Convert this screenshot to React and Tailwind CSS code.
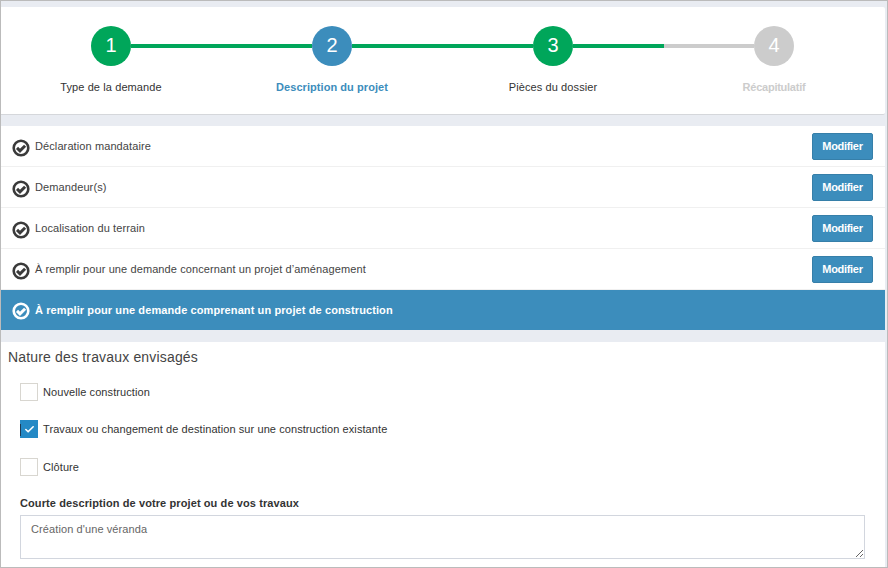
import { Check } from 'lucide-react';

const steps = [
  { n: 1, label: 'Type de la demande', circle: 'bg-[#00a65a]', text: 'text-[#333] font-normal tracking-[0.1px]', left: 'bg-transparent', right: 'bg-[#00a65a]' },
  { n: 2, label: 'Description du projet', circle: 'bg-[#3c8dbc]', text: 'text-[#3c8dbc] font-bold tracking-[0.06px]', left: 'bg-[#00a65a]', right: 'bg-[#00a65a]' },
  { n: 3, label: 'Pièces du dossier', circle: 'bg-[#00a65a]', text: 'text-[#333] font-normal tracking-[0.1px]', left: 'bg-[#00a65a]', right: 'bg-[#00a65a]' },
  { n: 4, label: 'Récapitulatif', circle: 'bg-[#cccccc]', text: 'text-[#cccccc] font-bold tracking-[-0.25px]', left: 'bg-[#cccccc]', right: 'bg-transparent' },
];

const rows = [
  'Déclaration mandataire',
  'Demandeur(s)',
  'Localisation du terrain',
  'À remplir pour une demande concernant un projet d’aménagement',
];

function CircleCheck({ color }) {
  return (
    <svg width="18" height="18" viewBox="0 0 18 18" className="shrink-0">
      <circle cx="9" cy="9" r="7.3" fill="none" stroke={color} strokeWidth="2.6" />
      <path d="M5 8.9 L8 11.9 L13.1 6.8" fill="none" stroke={color} strokeWidth="3" />
    </svg>
  );
}

function Option({ label, checked, className }) {
  return (
    <div className={`flex items-center gap-[5px] ${className}`}>
      {checked ? (
        <span className="w-[18px] h-[18px] bg-[#2489c5] flex items-center justify-center relative">
          <Check size={11} strokeWidth={3.5} color="#fff" />
          <span className="absolute left-[0px] top-[4px] w-[1px] h-[12px] bg-[#1f3a52]" />
        </span>
      ) : (
        <span className="w-[18px] h-[18px] bg-white border border-[#d8d6d0]" />
      )}
      <span className="text-[11px] leading-[18px] tracking-[0.08px] text-[#333]">{label}</span>
    </div>
  );
}

export default function App() {
  return (
    <div className="w-[888px] h-[568px] overflow-hidden bg-[#e9ecf2] border border-[#bbbbbb] pt-[6px] pr-[2px] font-['Liberation_Sans',Arial,sans-serif] flex flex-col">
      <div className="h-[108px] shrink-0 bg-white border-b border-[#d5d7db] rounded-tr-[2px] rounded-br-[2px] grid grid-cols-[repeat(4,221px)] pt-[19px]">
        {steps.map((s) => (
          <div key={s.n} className="flex flex-col">
            <div className="flex items-center">
              <div className={`w-[90px] h-[4px] ${s.left}`} />
              <div className={`w-[40px] h-[40px] pb-[2px] rounded-full flex items-center justify-center text-white text-[20px] leading-none ${s.circle}`}>
                {s.n}
              </div>
              <div className={`flex-1 h-[4px] ${s.right}`} />
            </div>
            <div className={`mt-[14px] w-[220px] text-center text-[11px] leading-[14px] ${s.text}`}>{s.label}</div>
          </div>
        ))}
      </div>

      <div className="mt-[11px] shrink-0 flex flex-col">
        {rows.map((r) => (
          <div key={r} className="h-[41px] bg-white border-b border-[#f0f0f0] flex items-center justify-between pl-[11px] pr-[12px]">
            <div className="flex items-center gap-[5px]">
              <span className="mt-[3px]"><CircleCheck color="#3a3a3a" /></span>
              <span className="text-[11px] leading-[14px] tracking-[0.1px] text-[#444] -mt-[1px]">{r}</span>
            </div>
            <button className="w-[61px] h-[27px] rounded-[2px] bg-[#3c8dbc] border border-[#367fa9] text-white text-[11px] font-bold tracking-[-0.3px]">
              Modifier
            </button>
          </div>
        ))}
        <div className="h-[40px] bg-[#3c8dbc] flex items-center pl-[11px] gap-[5px]">
          <span className="mt-[2px]"><CircleCheck color="#ffffff" /></span>
          <span className="text-[11px] leading-[14px] tracking-[0.1px] font-bold text-white -mt-[1px]">
            À remplir pour une demande comprenant un projet de construction
          </span>
        </div>
      </div>

      <div className="mt-[12px] flex-1 bg-white pl-[7px] pr-[20px] pt-[6px]">
        <h2 className="text-[14px] leading-[18px] tracking-[0.17px] text-[#444]">Nature des travaux envisagés</h2>
        <div className="pl-[12px]">
          <Option className="mt-[17px]" label="Nouvelle construction" />
          <Option className="mt-[19px]" label="Travaux ou changement de destination sur une construction existante" checked />
          <Option className="mt-[20px]" label="Clôture" />
          <div className="mt-[20px] text-[11px] leading-[14px] tracking-[0.1px] font-bold text-[#333]">
            Courte description de votre projet ou de vos travaux
          </div>
          <textarea
            readOnly
            defaultValue="Création d'une véranda"
            className="mt-[5px] block w-[845px] h-[44px] border border-[#d2d6de] px-[10px] py-[6px] text-[11px] leading-[14px] tracking-[0.1px] text-[#666] outline-none"
          />
        </div>
      </div>
    </div>
  );
}
